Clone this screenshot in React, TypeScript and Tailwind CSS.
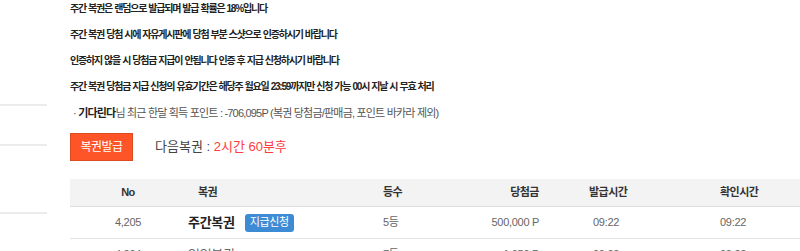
const font = { fontFamily: '"Liberation Sans", "Noto Sans CJK KR", sans-serif' }

type Row = {
  no: string
  name: string
  apply: boolean
  rank: string
  prize: string
  issued: string
  checked: string
}

const rows: Row[] = [
  { no: "4,205", name: "주간복권", apply: true, rank: "5등", prize: "500,000 P", issued: "09:22", checked: "09:22" },
  { no: "4,204", name: "일일복권", apply: false, rank: "7등", prize: "1,050 P", issued: "09:22", checked: "09:22" },
]

const notes = [
  "주간 복권은 랜덤으로 발급되며 발급 확률은 18%입니다",
  "주간 복권 당첨 시에 자유게시판에 당첨 부분 스샷으로 인증하시기 바랍니다",
  "인증하지 않을 시 당첨금 지급이 안됩니다 인증 후 지급 신청하시기 바랍니다",
  "주간 복권 당첨금 지급 신청의 유효기간은 해당주 월요일 23:59까지만 신청 가능 00시 지날 시 무효 처리",
]

const cols = "grid grid-cols-[116px_197px_100px_106px_131px_120px]"

export default function App() {
  return (
    <div className="w-[800px] h-[251px] overflow-hidden bg-white flex" style={font}>
      <aside className="w-[47px] shrink-0 flex flex-col">
        <div className="h-[106px] border-b-2 border-[#ebebeb]" />
        <div className="h-[40px] border-b-2 border-[#ebebeb]" />
        <div className="h-[68px] border-b-2 border-[#ebebeb]" />
      </aside>

      <main className="ml-[23px] flex-1 min-w-0 overflow-hidden">
        <div className="flex flex-col gap-2">
          {notes.map((n, i) => (
            <p key={i} className="leading-[18px] text-[10px] font-bold tracking-[-1.2px] [word-spacing:0.5px] text-[#222] whitespace-nowrap">
              {n}
            </p>
          ))}
        </div>

        <p className="mt-2 ml-[3px] leading-[18px] text-[11px] tracking-[-0.8px] text-[#555] whitespace-nowrap">
          · <b className="text-[#222]">기다린다</b>님 최근 한달 획득 포인트 : -706,095P (복권 당첨금/판매금, 포인트 바카라 제외)
        </p>

        <div className="mt-[11px] flex items-center">
          <button className="w-[63px] h-[28px] bg-[#fd5428] border border-[#dc4a1f] text-white text-[12px] tracking-[-0.5px]">
            복권발급
          </button>
          <span className="ml-[22px] text-[13px] text-[#444]">
            다음복권 : <span className="text-[#ff3b3b]">2시간 60분후</span>
          </span>
        </div>

        <div className="mt-[18px] w-[770px]">
          <div className={`${cols} h-[28px] items-center bg-[#f3f3f3] border-b border-[#dddddd] text-[11px] font-bold text-[#333] tracking-[-0.5px]`}>
            <div className="text-center">No</div>
            <div className="pl-[12px]">복권</div>
            <div>등수</div>
            <div className="text-right pr-[50px]">당첨금</div>
            <div>발급시간</div>
            <div>확인시간</div>
          </div>
          {rows.map((r) => (
            <div key={r.no} className={`${cols} h-[32px] items-center border-b border-[#e3e3e3] text-[11px] text-[#666] tracking-[-0.3px]`}>
              <div className="text-center">{r.no}</div>
              <div className="pl-[2px] flex items-center gap-[10px]">
                <span className={r.apply ? "text-[13px] font-bold text-[#222]" : "text-[13px] text-[#666]"}>{r.name}</span>
                {r.apply && (
                  <span className="h-[18px] px-[5px] flex items-center rounded-[3px] bg-[#3d8bd4] text-white text-[11px]">
                    지급신청
                  </span>
                )}
              </div>
              <div>{r.rank}</div>
              <div className="text-right pr-[50px]">{r.prize}</div>
              <div className="pl-[4px]">{r.issued}</div>
              <div>{r.checked}</div>
            </div>
          ))}
        </div>
      </main>
    </div>
  )
}
